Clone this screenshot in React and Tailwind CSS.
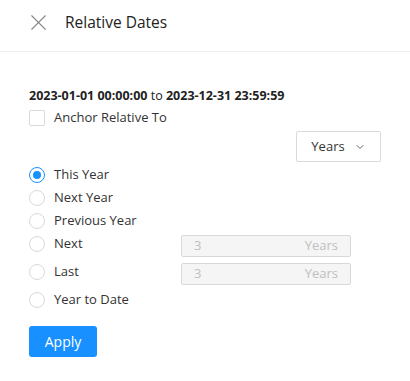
import { X, ChevronDown } from "lucide-react";

const options = [
  { label: "This Year", checked: true },
  { label: "Next Year" },
  { label: "Previous Year" },
  { label: "Next", input: true },
  { label: "Last", input: true, gap: true },
  { label: "Year to Date", gap: true },
];

const Radio = ({ checked }) => (
  <span
    className={`w-4 h-4 rounded-full border flex items-center justify-center shrink-0 bg-white ${
      checked ? "border-[#1890ff]" : "border-[#d9d9d9]"
    }`}
  >
    {checked && <span className="w-2 h-2 rounded-full bg-[#1890ff]" />}
  </span>
);

export default function App() {
  return (
    <div className="w-[410px] h-[381px] bg-white text-[#333] font-['Open_Sans',sans-serif] overflow-hidden">
      {/* Header */}
      <div className="h-[52px] border-b border-[#eeeeee] flex items-center pl-[25px] pb-[6px]">
        <X size={27} strokeWidth={1} className="text-[#888]" />
        <span className="ml-[13px] text-[15.5px] text-[#222]">Relative Dates</span>
      </div>

      <div className="pl-[29px] pr-[29px]">
        <div className="mt-[36px] text-[12.5px] font-bold text-[#222] leading-4">
          2023-01-01 00:00:00 <span className="font-normal">to</span> 2023-12-31 23:59:59
        </div>

        <div className="mt-[6px] flex items-center h-4">
          <span className="w-4 h-4 border border-[#d9d9d9] rounded-[2px] bg-white" />
          <span className="ml-[9px] text-[13px]">Anchor Relative To</span>
        </div>

        <div className="mt-[5px] flex justify-end">
          <div className="w-[85px] h-[31px] border border-[#d9d9d9] rounded-[2px] flex items-center justify-center gap-[9px] text-[13px]">
            Years
            <ChevronDown size={12} strokeWidth={1.5} />
          </div>
        </div>

        <div className="mt-[1px] flex flex-col">
          {options.map((o) => (
            <div key={o.label} className={`flex items-center h-[23px] ${o.gap ? "mt-[5px]" : ""}`}>
              <Radio checked={o.checked} />
              <span className="ml-[9px] text-[13px] w-[127px]">{o.label}</span>
              {o.input && (
                <div className="mt-[4px] w-[170px] h-[22px] bg-[#f5f5f5] border border-[#d9d9d9] rounded-[2px] flex items-center justify-between px-3 text-[13px] text-[#bfbfbf]">
                  <span>3</span>
                  <span>Years</span>
                </div>
              )}
            </div>
          ))}
        </div>

        <button className="mt-[15px] w-[68px] h-[31px] rounded-[3px] bg-[#1890ff] text-white text-[14px]">
          Apply
        </button>
      </div>
    </div>
  );
}
